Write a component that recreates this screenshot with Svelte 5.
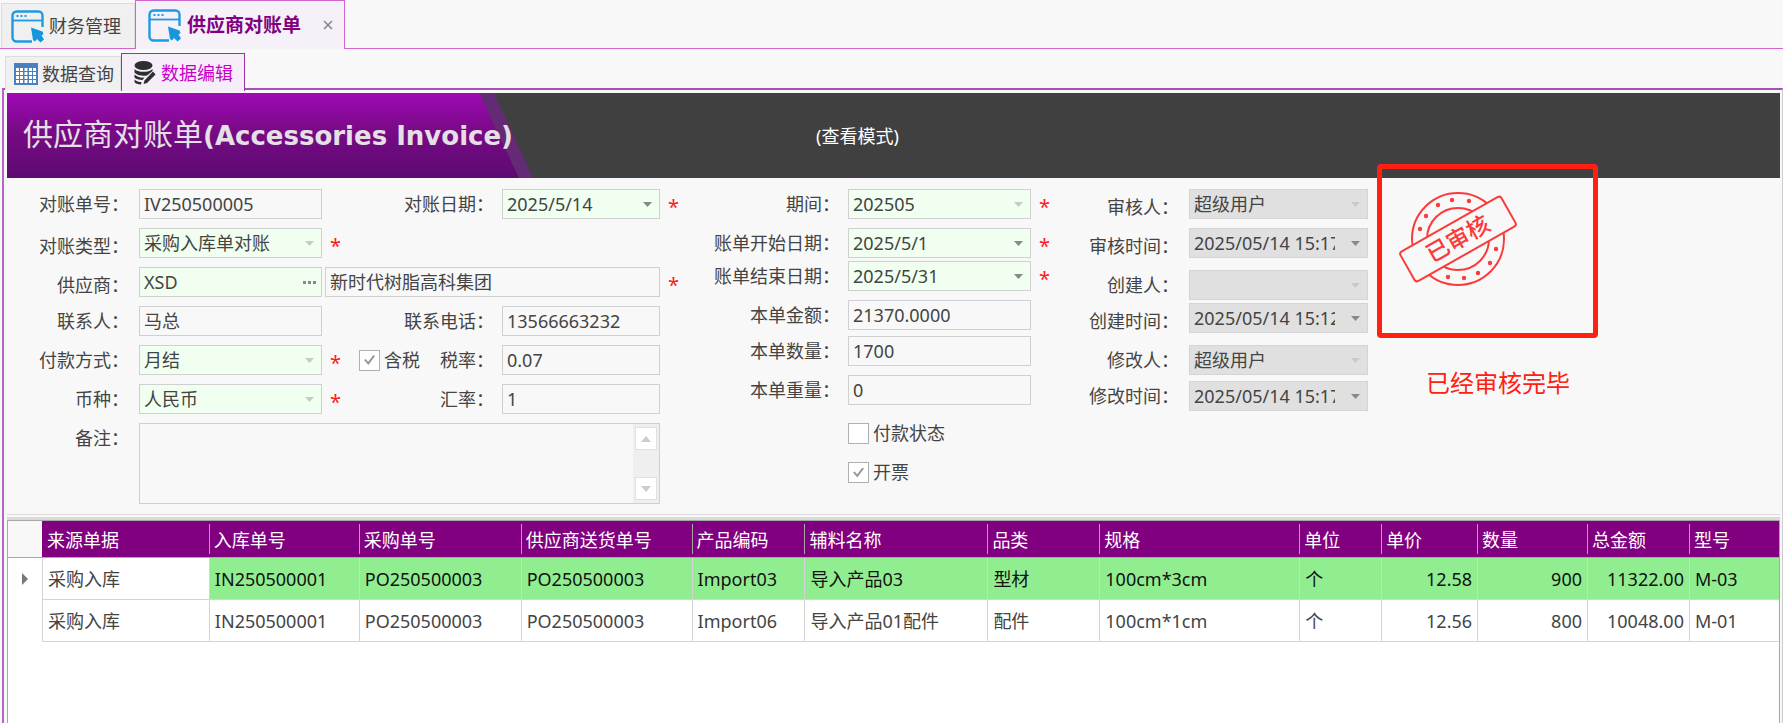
<script>
  const amounts = [
    { id: 'period', label: '期间', value: '202505', kind: 'select', required: true },
    { id: 'start', label: '账单开始日期', value: '2025/5/1', kind: 'date', required: true, gap: 'g9' },
    { id: 'end', label: '账单结束日期', value: '2025/5/31', kind: 'date', required: true, gap: 'g3' },
    { id: 'amount', label: '本单金额', value: '21370.0000', kind: 'text', gap: 'g9' },
    { id: 'qty', label: '本单数量', value: '1700', kind: 'text', gap: 'g6' },
    { id: 'weight', label: '本单重量', value: '0', kind: 'text', gap: 'g9' }
  ];

  const audit = [
    { id: 'auditor', label: '审核人', value: '超级用户', kind: 'select', low: true },
    { id: 'audit-time', label: '审核时间', value: '2025/05/14 15:17:26', kind: 'date', gap: 'g9', low: true },
    { id: 'creator', label: '创建人', value: '', kind: 'select', gap: 'g12' },
    { id: 'create-time', label: '创建时间', value: '2025/05/14 15:12:40', kind: 'date', gap: 'g3', low: true },
    { id: 'editor', label: '修改人', value: '超级用户', kind: 'select', gap: 'g12' },
    { id: 'edit-time', label: '修改时间', value: '2025/05/14 15:17:26', kind: 'date', gap: 'g6' }
  ];

  const columns = [
    { name: '来源单据', w: 167 },
    { name: '入库单号', w: 150 },
    { name: '采购单号', w: 162 },
    { name: '供应商送货单号', w: 171 },
    { name: '产品编码', w: 113 },
    { name: '辅料名称', w: 183 },
    { name: '品类', w: 112 },
    { name: '规格', w: 200 },
    { name: '单位', w: 82 },
    { name: '单价', w: 96, num: true },
    { name: '数量', w: 110, num: true },
    { name: '总金额', w: 102, num: true },
    { name: '型号', w: 90 }
  ];
  const tableWidth = 34 + columns.reduce((sum, c) => sum + c.w, 0);

  const rows = [
    ['采购入库', 'IN250500001', 'PO250500003', 'PO250500003', 'Import03', '导入产品03', '型材', '100cm*3cm', '个', '12.58', '900', '11322.00', 'M-03'],
    ['采购入库', 'IN250500001', 'PO250500003', 'PO250500003', 'Import06', '导入产品01配件', '配件', '100cm*1cm', '个', '12.56', '800', '10048.00', 'M-01']
  ];
</script>

{#snippet windowIcon()}
  <svg class="win-icon" viewBox="0 0 33 33" aria-hidden="true">
    <path d="M31.500 17V5.500a4 4 0 0 0-4-4h-22a4 4 0 0 0-4 4v22a4 4 0 0 0 4 4H21" fill="none" stroke="#1c9be0" stroke-width="2.400" />
    <path d="M1.500 10.500h30" stroke="#1c9be0" stroke-width="1.800" />
    <path d="M5.500 6h2M9.500 6h2M13.500 6h2" stroke="#1c9be0" stroke-width="1.800" />
    <path d="M20 17.500L31.500 21.500L32.500 24L30.500 25.500L33 29.500L29.500 32.500L26 29L24 31.500L22 30Z" fill="#1796de" />
  </svg>
{/snippet}

{#snippet arrow()}
  <svg class="arrow" viewBox="0 0 9 5" aria-hidden="true"><path d="M0 0H9L4.500 5Z" /></svg>
{/snippet}

{#snippet control(id, value, kind, tone)}
  <div class="box {tone} {kind}">
    {#if kind === 'select'}
      <select {id}><option>{value}</option></select>
      {@render arrow()}
    {:else}
      <input {id} type="text" {value} readonly />
      {#if kind === 'date'}
        <button type="button" aria-label="选择日期">{@render arrow()}</button>
      {/if}
    {/if}
  </div>
{/snippet}

<div class="page" lang="zh-CN">
  <nav class="bar main-bar">
    <button class="tab" type="button">{@render windowIcon()}<span>财务管理</span></button>
    <div class="tab active">
      <button class="plain" type="button">{@render windowIcon()}<span>供应商对账单</span></button>
      <button class="plain close" type="button" aria-label="关闭">
        <svg viewBox="0 0 10 10" aria-hidden="true"><path d="M1 1L9 9M9 1L1 9" stroke="#888" stroke-width="1.600" /></svg>
      </button>
    </div>
  </nav>

  <nav class="bar sub-bar">
    <button class="tab" type="button">
      <svg class="grid-icon" viewBox="0 0 24 22" aria-hidden="true">
        <rect width="24" height="22" fill="#4a80bd" />
        <path d="M2 5h3v3H2zM6 5h3v3H6zM10.500 5h3v3h-3zM15 5h3v3h-3zM19 5h3v3h-3zM2 9h3v3H2zM6 9h3v3H6zM10.500 9h3v3h-3zM15 9h3v3h-3zM19 9h3v3h-3zM2 13h3v3H2zM6 13h3v3H6zM10.500 13h3v3h-3zM15 13h3v3h-3zM19 13h3v3h-3zM2 17h3v3H2zM6 17h3v3H6zM10.500 17h3v3h-3zM15 17h3v3h-3zM19 17h3v3h-3z" fill="#fff" />
      </svg>
      <span>数据查询</span>
    </button>
    <button class="tab active" type="button">
      <svg class="db-icon" viewBox="0 0 22 24" aria-hidden="true">
        <ellipse cx="9.500" cy="4.500" rx="9" ry="4.500" fill="#2e2e2e" />
        <path d="M.5 8C3 11.500 15 12 18.500 8V10L13 14.500C9 15.500 2.500 14 .5 11.500Z" fill="#2e2e2e" />
        <path d="M.5 13.500C3 16 7 17 10.500 16.500L8.500 19C5 19 1.500 18 .5 16.500ZM.5 18.500C2.500 20.500 5 21 7.500 21L7 23.500C4 23.500 1 22.500 .5 21Z" fill="#2e2e2e" />
        <path d="M19 10.500L21.500 13.500L13 22L9.500 23L10.500 19.500Z" fill="#2e2e2e" />
      </svg>
      <span>数据编辑</span>
    </button>
  </nav>

  <main>
    <header class="banner">
      <h1><span class="zh">供应商对账单</span>(Accessories Invoice)</h1>
      <p>(查看模式)</p>
    </header>

    <form class="form">
      <section class="base">
        <label for="no">对账单号：</label>
        {@render control('no', 'IV250500005', 'text', '')}
        <div class="mid"><label for="date">对账日期：</label></div>
        {@render control('date', '2025/5/14', 'date', 'green')}
        <span class="star">*</span>

        <label class="low" for="type">对账类型：</label>
        {@render control('type', '采购入库单对账', 'select', 'green')}
        <span class="star rest">*</span>

        <label class="low" for="supplier">供应商：</label>
        <div class="box green">
          <input id="supplier" type="text" value="XSD" readonly />
          <button type="button" aria-label="选择供应商">
            <svg class="dots" viewBox="0 0 13 3" aria-hidden="true"><path d="M0 0h3v3H0zM5 0h3v3H5zM10 0h3v3h-3z" /></svg>
          </button>
        </div>
        <div class="box wide"><input type="text" value="新时代树脂高科集团" aria-label="供应商名称" readonly /></div>
        <span class="star">*</span>

        <label for="contact">联系人：</label>
        {@render control('contact', '马总', 'text', '')}
        <div class="mid"><label for="phone">联系电话：</label></div>
        {@render control('phone', '13566663232', 'text', '')}
        <span></span>

        <label for="pay">付款方式：</label>
        {@render control('pay', '月结', 'select', 'green')}
        <div class="mid">
          <span class="star">*</span>
          <label class="check"><input type="checkbox" checked />含税</label>
          <label for="tax">税率：</label>
        </div>
        {@render control('tax', '0.07', 'text', '')}
        <span></span>

        <label for="currency">币种：</label>
        {@render control('currency', '人民币', 'select', 'green')}
        <div class="mid"><span class="star">*</span><label for="rate">汇率：</label></div>
        {@render control('rate', '1', 'text', '')}
        <span></span>

        <label for="remark">备注：</label>
        <div class="box memo">
          <textarea id="remark" readonly></textarea>
          <div class="scroll">
            <button type="button" aria-label="向上"><svg viewBox="0 0 10 6" aria-hidden="true"><path d="M0 6H10L5 0Z" /></svg></button>
            <button type="button" aria-label="向下"><svg viewBox="0 0 10 6" aria-hidden="true"><path d="M0 0H10L5 6Z" /></svg></button>
          </div>
        </div>
      </section>

      <section class="amounts">
        {#each amounts as f}
          <div class="row {f.gap ?? ''}">
            <label for={f.id}>{f.label}：</label>
            {@render control(f.id, f.value, f.kind, f.required ? 'green' : '')}
            {#if f.required}<span class="star">*</span>{/if}
          </div>
        {/each}
        <div class="row g18"><label class="check"><input type="checkbox" />付款状态</label></div>
        <div class="row g18"><label class="check"><input type="checkbox" checked />开票</label></div>
      </section>

      <section class="audit">
        {#each audit as f}
          <div class="row {f.gap ?? ''}">
            <label class:low={f.low} for={f.id}>{f.label}：</label>
            {@render control(f.id, f.value, f.kind, 'gray')}
          </div>
        {/each}
      </section>

      <aside>
        <div class="frame">
          <svg class="stamp" viewBox="0 0 120 96" role="img" aria-label="已审核">
            <g fill="none" stroke="#fb3a3a" stroke-width="2">
              <circle cx="60" cy="48" r="46" />
              <circle cx="60" cy="48" r="31" />
            </g>
            <g fill="#fb3a3a">
              <circle cx="22" cy="38" r="2.200" /><circle cx="28" cy="25" r="2.200" /><circle cx="40" cy="14" r="2.200" />
              <circle cx="54" cy="9" r="2.200" /><circle cx="71" cy="10" r="2.200" /><circle cx="98" cy="58" r="2.200" />
              <circle cx="92" cy="72" r="2.200" /><circle cx="80" cy="82" r="2.200" /><circle cx="66" cy="87" r="2.200" />
              <circle cx="50" cy="86" r="2.200" />
            </g>
            <g transform="rotate(-29.500 60 48)">
              <rect x="2" y="31" width="116" height="34" rx="3" fill="#f8f8f8" stroke="#fb3a3a" stroke-width="2" />
              <text x="60" y="56" text-anchor="middle">已审核</text>
            </g>
          </svg>
        </div>
        <p>已经审核完毕</p>
      </aside>
    </form>

    <div class="grid">
      <table>
        <colgroup>
          <col style="width: {(34 / tableWidth) * 100}%" />
          {#each columns as c}<col style="width: {(c.w / tableWidth) * 100}%" />{/each}
        </colgroup>
        <thead>
          <tr>
            <td class="gutter"></td>
            {#each columns as c}<th scope="col">{c.name}</th>{/each}
          </tr>
        </thead>
        <tbody>
          {#each rows as row, i}
            <tr class:current={i === 0}>
              <td class="gutter">
                {#if i === 0}<svg viewBox="0 0 6 12" aria-hidden="true"><path d="M0 0L6 6L0 12Z" fill="#777" /></svg>{/if}
              </td>
              {#each row as cell, j}<td class:num={columns[j].num}>{cell}</td>{/each}
            </tr>
          {/each}
        </tbody>
      </table>
    </div>
  </main>
</div>

<style>
  :global(body) { background: #f8f8f8; }
  .page, .page * { box-sizing: border-box; }
  .page {
    min-height: 100vh;
    display: flex;
    flex-direction: column;
    font: 18px/24px "Noto Sans", "Noto Sans CJK SC", sans-serif;
    color: #444;
    background: #f8f8f8;
  }
  button, input, select, textarea {
    font: inherit;
    color: inherit;
    background: none;
    border: 0;
    padding: 0;
    margin: 0;
    outline: 0;
    border-radius: 0;
  }
  svg { display: block; flex: none; }
  p, h1 { margin: 0; }

  .bar { display: flex; align-items: flex-end; white-space: nowrap; }
  .tab, .plain { display: flex; align-items: center; }
  .tab { border: 1px solid #dcdcdc; background: #f0f0f0; }
  .main-bar { height: 49px; border-bottom: 1px solid #cf66cf; padding-left: 1px; }
  .main-bar .tab { height: 45px; padding: 0 13px 0 9px; gap: 5px; border-bottom: 0; }
  .main-bar .tab.active {
    height: 49px;
    margin-bottom: -1px;
    padding: 0 11px 0 12px;
    gap: 22px;
    border-color: #cf66cf;
    background: #f6f0f8;
    color: #800080;
    font-size: 19px;
    font-weight: 700;
  }
  .plain { gap: 6px; }
  .win-icon { width: 33px; height: 33px; }
  .close svg { width: 10px; height: 10px; }

  .sub-bar { height: 41px; padding-left: 5px; position: relative; }
  .sub-bar .tab { height: 34px; padding: 0 6px 0 8px; gap: 4px; border-bottom: 0; }
  .sub-bar .tab.active {
    height: 38px;
    padding: 0 11px 0 12px;
    gap: 5px;
    margin-bottom: -1px;
    border-color: #9b30a8;
    background: #f5eef8;
    color: #c800c8;
  }
  .grid-icon { width: 24px; height: 22px; }
  .db-icon { width: 22px; height: 24px; }

  main {
    flex: 1;
    display: flex;
    flex-direction: column;
    margin: -2px 0 0 2px;
    padding: 3px 2px 0 3px;
    border-top: 2px solid #a850b8;
    border-left: 2px solid #b565c8;
    border-right: 1px solid #ccc;
  }
  .banner {
    position: relative;
    display: grid;
    grid-template-columns: 809fr 964fr;
    align-items: center;
    height: 85px;
    background: #404040;
    color: #fff;
    isolation: isolate;
  }
  .banner::before, .banner::after { content: ""; position: absolute; inset: 0; }
  .banner::before {
    z-index: -1;
    background: linear-gradient(#a009b5, #780a86 45%, #5c0a70);
    clip-path: polygon(0 0, 472px 0, 512px 100%, 0 100%);
  }
  .banner::after {
    z-index: -2;
    background: #642a75;
    clip-path: polygon(0 0, 487px 0, 526px 100%, 0 100%);
  }
  h1 { padding-left: 16px; font: 700 26px/40px "DejaVu Sans", "Noto Sans CJK SC", sans-serif; color: #e4e0e6; white-space: nowrap; }
  .zh { font-size: 30px; font-weight: 400; }

  .form { display: grid; grid-template-columns: 683fr 371fr 307fr 412fr; height: 337px; padding-top: 11px; border-bottom: 1px solid #ddd; }
  .base {
    display: grid;
    grid-template-columns: 124px 183fr 164px 158fr 22px;
    grid-auto-rows: min-content;
    gap: 9px 8px;
  }
  label { text-align: right; line-height: 30px; white-space: nowrap; }
  .base > label { padding-right: 2px; }
  .low { padding-top: 3px; height: 30px; }
  .mid { display: flex; justify-content: space-between; }
  .mid label:last-child { margin-left: auto; }
  .star { width: 20px; height: 30px; color: #ff1a1a; font-size: 20px; line-height: 36px; }
  .rest { grid-column: 3 / 6; }
  .wide { grid-column: 3 / 5; margin-left: -5px; }
  .memo.box { grid-column: 2 / 5; height: 81px; }

  .box { display: flex; position: relative; height: 30px; border: 1px solid #d0d0d0; min-width: 0; }
  .green { background: #f0fff0; }
  .gray { background: #e0e0e0; border-color: #d4d4d4; }
  .box input, .box select { flex: 1; min-width: 0; width: 100%; padding-left: 4px; appearance: none; }
  .box button { width: 24px; display: grid; place-items: center; flex: none; }
  .gray.box button { width: 32px; justify-items: end; padding-right: 7px; }
  .arrow { width: 9px; height: 5px; fill: #888; }
  .select .arrow { position: absolute; right: 7px; top: 12px; fill: #c4ccc4; }
  .dots { width: 13px; height: 3px; fill: #888; }
  textarea { flex: 1; resize: none; }
  .scroll { display: flex; flex-direction: column; justify-content: space-between; width: 26px; padding: 3px 2px; background: #efefef; }
  .scroll button { width: 22px; height: 23px; border: 1px solid #e0e0e0; background: #fff; }
  .scroll svg { width: 10px; height: 6px; fill: #ccc; }

  .row { display: grid; column-gap: 10px; }
  .amounts .row { grid-template-columns: 150px 1fr 22px; column-gap: 8px; }
  .audit .row { grid-template-columns: 118px 1fr; }
  .g3 { margin-top: 3px; }
  .g6 { margin-top: 6px; }
  .g9 { margin-top: 9px; }
  .g12 { margin-top: 12px; }
  .g18 { margin-top: 18px; }

  .check { display: flex; align-items: center; gap: 4px; }
  .row .check { grid-column: 2; line-height: 21px; }
  .mid .check { margin-left: 9px; }
  .mid:has(.check) { justify-content: flex-start; }
  .check input { appearance: none; width: 21px; height: 21px; border: 1px solid #b0b0b0; background: #fff; display: grid; place-items: center; }
  .check input:checked::after {
    content: "";
    width: 11px;
    height: 10px;
    background: #999;
    clip-path: polygon(0 50%, 15% 40%, 38% 68%, 85% 0, 100% 10%, 40% 100%);
  }

  aside { padding-left: 9px; }
  .frame { position: relative; width: 221px; height: 174px; margin-top: -25px; padding: 22px 0 0 16px; border: 5px solid #ff2012; border-radius: 4px; }
  .stamp { width: 120px; height: 96px; }
  .stamp text { font: 500 23px "Noto Sans CJK SC", sans-serif; fill: #fb3a3a; }
  aside p { margin: 27px 0 0 49px; font-size: 24px; line-height: 36px; color: #ff2012; }

  .grid { flex: 1; margin-top: 5px; border: 1px solid #a8a8a8; border-bottom: 0; background: #fff; box-shadow: 0 -3px #dadada; }
  table { width: 100%; border-collapse: separate; border-spacing: 0; table-layout: fixed; text-align: left; white-space: nowrap; }
  th { height: 37px; padding: 2px 5px 0; font-weight: 400; color: #fff; background: linear-gradient(#a8a8a8, #a8a8a8) left center / 1px 30px no-repeat #800080; border-bottom: 1px solid #a8a8a8; }
  .gutter + th { background: #800080; }
  thead .gutter { background: #f8f8f8; border: 0; border-bottom: 1px solid #a8a8a8; }
  td { height: 42px; padding: 0 5px; border-left: 1px solid #d4d4d4; border-bottom: 1px solid #d4d4d4; }
  thead td { height: 37px; }
  tbody .gutter { border: 0; padding: 0 0 0 14px; }
  .gutter svg { width: 6px; height: 12px; }
  .num { text-align: right; }
  .current td { background: #90ee90; color: #111; }
  .current .gutter, .current .gutter + td { background: #fff; color: inherit; }
</style>
